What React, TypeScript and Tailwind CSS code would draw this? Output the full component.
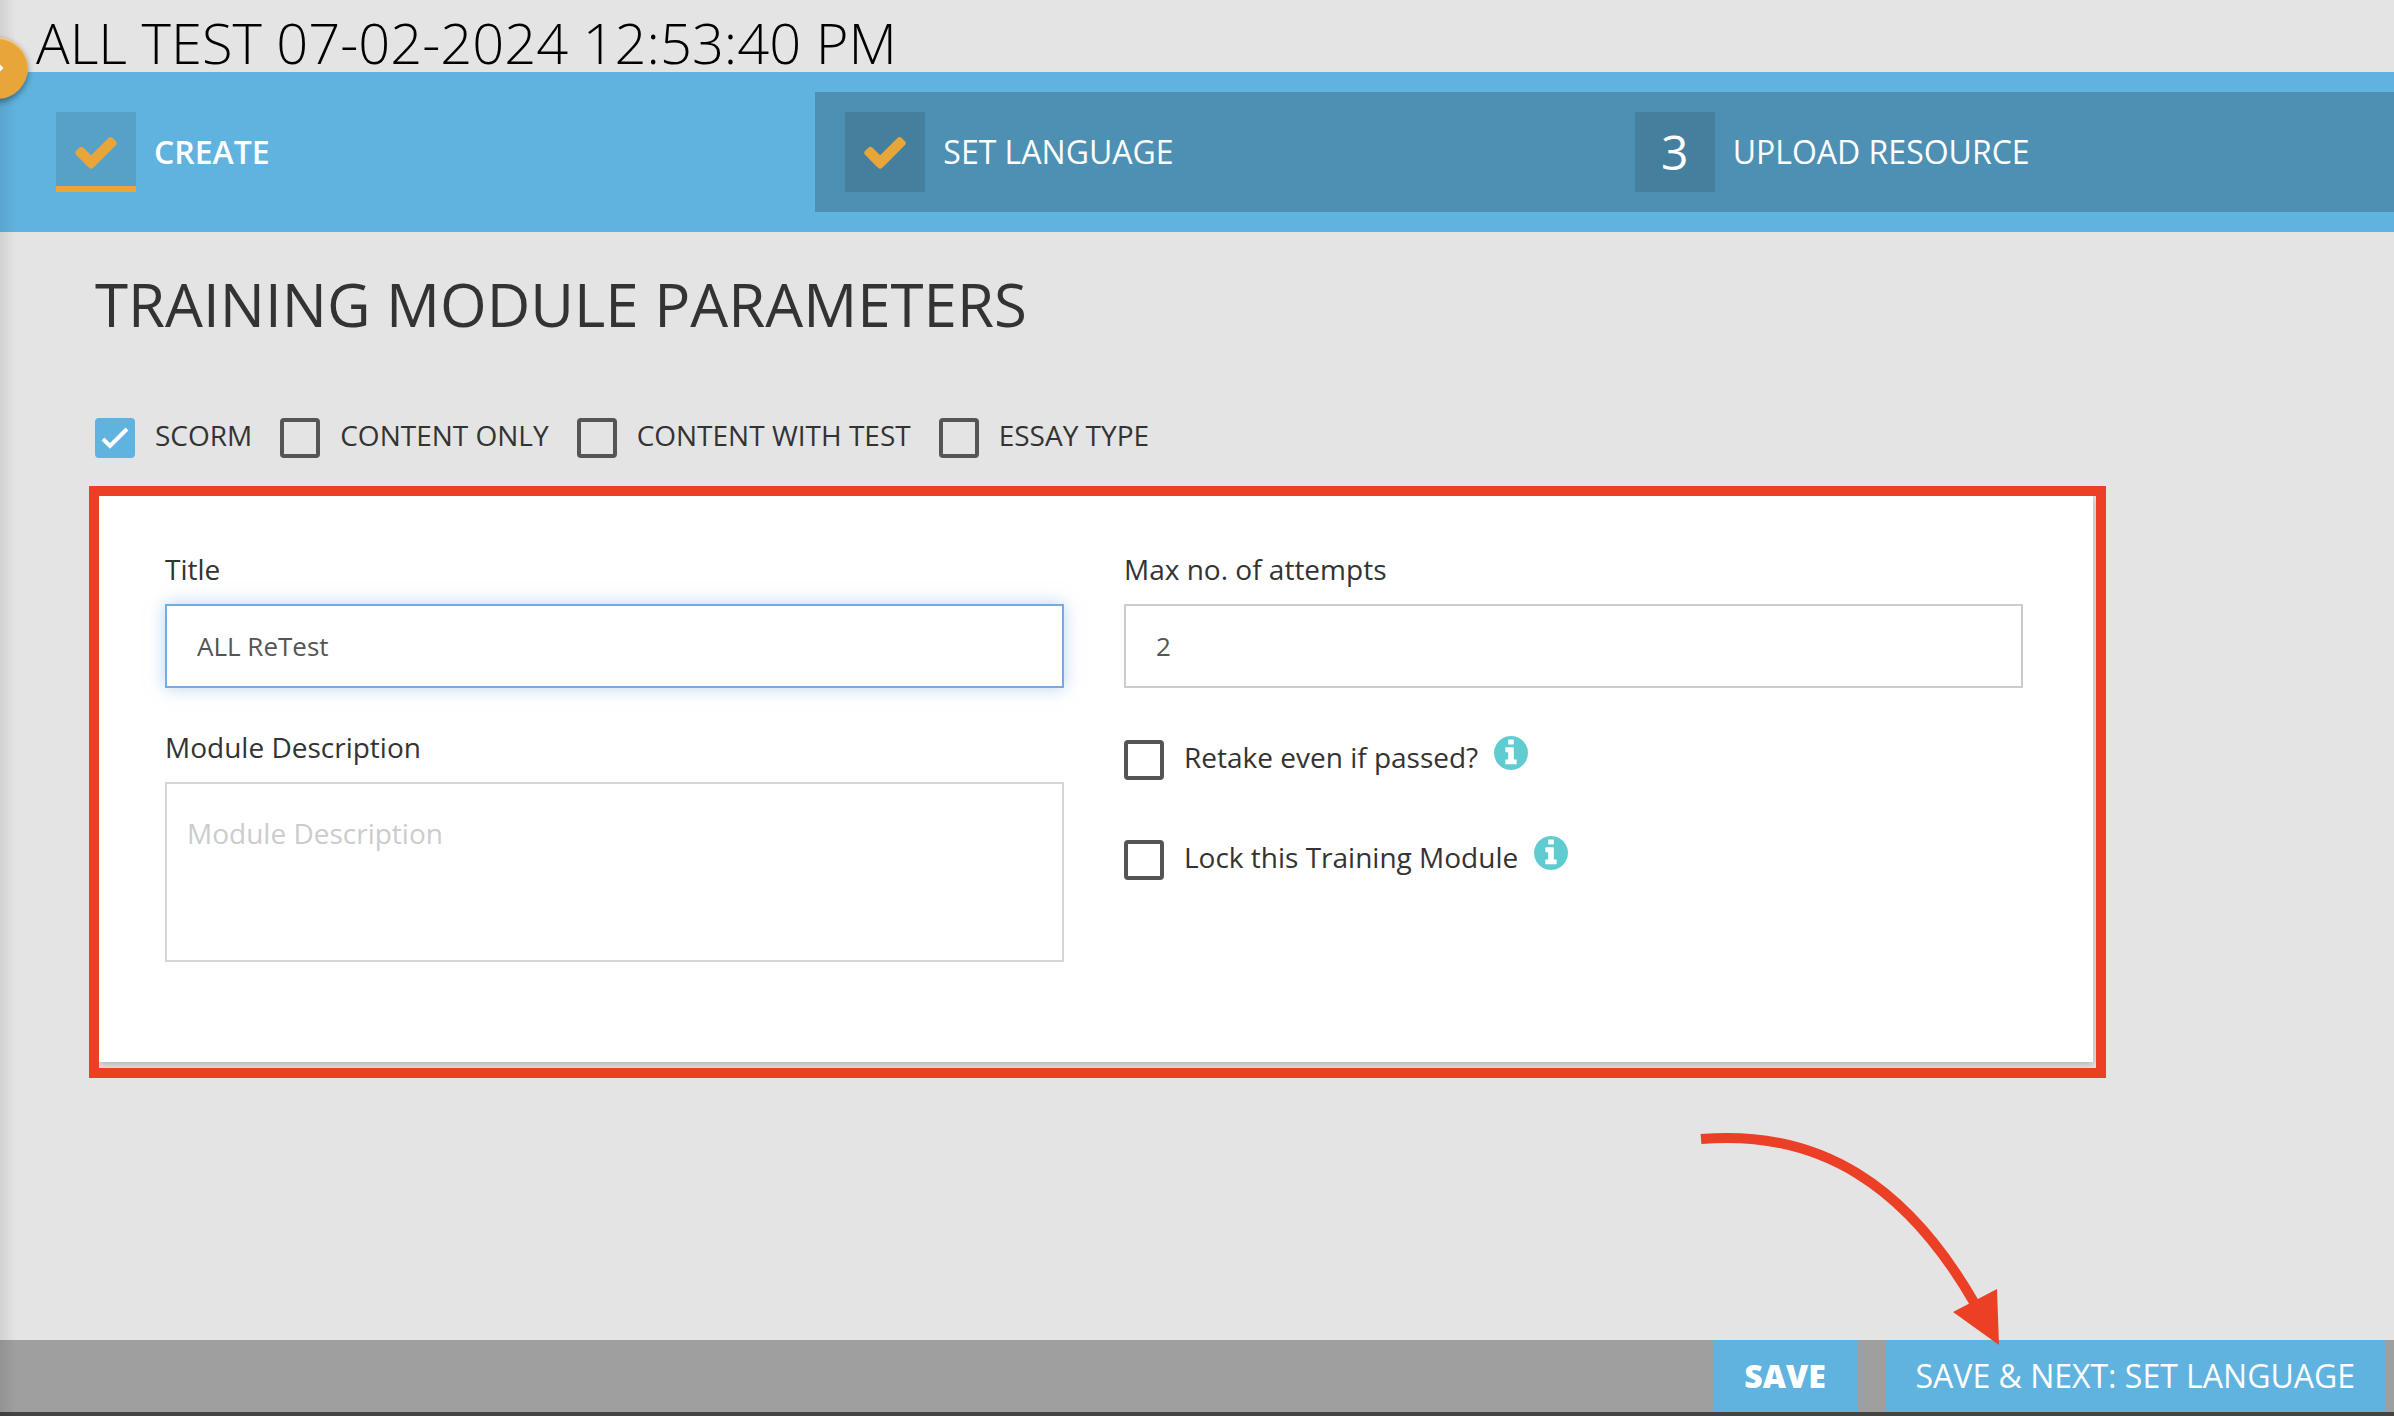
import { useState } from "react";
import { FaChevronRight } from "react-icons/fa";

const MODULE_TYPES = ["SCORM", "CONTENT ONLY", "CONTENT WITH TEST", "ESSAY TYPE"];

const STEPS = [
  { label: "CREATE", done: true },
  { label: "SET LANGUAGE", done: true },
  { label: "UPLOAD RESOURCE", done: false },
];

export default function App() {
  const [type, setType] = useState("SCORM");

  return (
    <div className="relative flex min-h-screen flex-col overflow-hidden bg-[#e4e4e4] font-['Open_Sans',sans-serif] text-[#333]">
      <header className="flex h-[72px] items-center pt-3 pl-9">
        <h1 className="text-[56px] leading-[56px] font-light whitespace-nowrap text-black">ALL TEST 07-02-2024 12:53:40 PM</h1>
      </header>
      <Stepper current={0} />

      <main className="flex-1 pr-[288px] pl-[89px]">
        <h2 className="pt-[38px] pl-1.5 text-[60px] leading-[68px]">TRAINING MODULE PARAMETERS</h2>
        <div className="flex gap-7 pt-20 pl-1.5">
          {MODULE_TYPES.map((name) => (
            <Check key={name} label={name} checked={type === name} onChange={() => setType(name)} />
          ))}
        </div>
        <ParameterForm />
      </main>

      <footer className="flex h-[76px] justify-end gap-7 border-b-4 border-[#444] bg-[#9f9f9f] pr-[9px] text-[32px] text-white">
        <button className="w-[145px] bg-[#60b3df] font-extrabold">SAVE</button>
        <button className="bg-[#60b3df] px-[30px]">SAVE &amp; NEXT: SET LANGUAGE</button>
      </footer>

      <DrawerHandle />
      <Arrow />
    </div>
  );
}

function Stepper({ current }: { current: number }) {
  return (
    <nav className="grid h-[160px] grid-cols-3 bg-[#60b3df] py-5 pl-[26px]">
      {STEPS.map(({ label, done }, i) => (
        <a
          key={label}
          href="#"
          className={`flex items-center gap-[18px] pl-[30px] text-[32px] text-white ${i === current ? "font-semibold" : "bg-[#4d90b3]"}`}
        >
          <span
            className={`flex size-20 items-center justify-center text-5xl font-normal ${
              i === current ? "border-b-6 border-[#e8a53a] bg-[#57a1c9] pt-1.5" : "bg-[#457f9e]"
            }`}
          >
            {done ? <CheckIcon /> : i + 1}
          </span>
          {label}
        </a>
      ))}
    </nav>
  );
}

function ParameterForm() {
  return (
    <form className="mt-7 overflow-hidden border-10 border-[#eb4026] pr-[3px] pb-1.5">
      <div className="grid grid-cols-2 gap-[60px] bg-white pt-[54px] pr-[70px] pb-[100px] pl-[66px] text-[28px] leading-[38px] shadow-[0_2px_8px_#00000040]">
        <div className="flex flex-col">
          <label htmlFor="title">Title</label>
          <input
            id="title"
            defaultValue="ALL ReTest"
            className="mt-4 h-[84px] border-2 border-[#74abe2] px-[30px] text-[26px] text-[#555] shadow-[0_0_16px_#74abe280] outline-none"
          />
          <label htmlFor="description" className="mt-10">
            Module Description
          </label>
          <textarea
            id="description"
            placeholder="Module Description"
            className="mt-4 h-[180px] resize-none border-2 border-[#d6d6d6] px-5 py-[30px] outline-none placeholder:text-[#ccc]"
          />
        </div>
        <div className="flex flex-col">
          <label htmlFor="attempts">Max no. of attempts</label>
          <input
            id="attempts"
            defaultValue="2"
            className="mt-4 h-[84px] border-2 border-[#ccc] px-[30px] text-[26px] text-[#555] outline-none"
          />
          <div className="mt-[52px] flex flex-col gap-[60px]">
            <Check label="Retake even if passed?" info />
            <Check label="Lock this Training Module" info />
          </div>
        </div>
      </div>
    </form>
  );
}

type CheckProps = {
  label: string;
  checked?: boolean;
  info?: boolean;
  onChange?: () => void;
};

function Check({ label, checked, info, onChange }: CheckProps) {
  return (
    <label className="flex h-10 items-center gap-5 text-[28px] leading-[34px] whitespace-nowrap">
      <span className="relative size-10">
        <input
          type="checkbox"
          checked={checked}
          onChange={onChange}
          className="peer block size-10 appearance-none rounded-sm border-4 border-[#555] checked:border-[#60b3df] checked:bg-[#60b3df]"
        />
        <svg viewBox="0 0 40 40" className="pointer-events-none absolute inset-0 hidden size-10 peer-checked:block">
          <path d="M8 21l7 7 17-17" fill="none" stroke="white" strokeWidth="4" />
        </svg>
      </span>
      <span className="flex items-start gap-4 pb-1.5">
        {label}
        {info && <InfoIcon />}
      </span>
    </label>
  );
}

function CheckIcon() {
  return (
    <svg viewBox="0 0 1792 1792" fill="currentColor" className="size-12 text-[#e8a53a]">
      <path d="M1671 566q0 40-28 68l-724 724-136 136q-28 28-68 28t-68-28l-136-136-362-362q-28-28-28-68t28-68l136-136q28-28 68-28t68 28l294 295 656-657q28-28 68-28t68 28l136 136q28 28 28 68z" />
    </svg>
  );
}

function InfoIcon() {
  return (
    <svg viewBox="128 128 1536 1536" fill="currentColor" className="-mt-1 size-[34px] text-[#5fccd1]">
      <path d="M1152 1376v-160q0-14-9-23t-23-9h-96v-512q0-14-9-23t-23-9h-320q-14 0-23 9t-9 23v160q0 14 9 23t23 9h96v320h-96q-14 0-23 9t-9 23v160q0 14 9 23t23 9h448q14 0 23-9t9-23zm-128-896v-160q0-14-9-23t-23-9h-192q-14 0-23 9t-9 23v160q0 14 9 23t23 9h192q14 0 23-9t9-23zm640 416q0 209-103 385.5t-279.5 279.5-385.5 103-385.5-103-279.5-279.5-103-385.5 103-385.5 279.5-279.5 385.5-103 385.5 103 279.5 279.5 103 385.5z" />
    </svg>
  );
}

function DrawerHandle() {
  return (
    <>
      <div className="pointer-events-none absolute inset-y-0 left-0 w-4 bg-linear-to-r from-black/8 to-transparent" />
      <button
        aria-label="Open menu"
        className="absolute top-[37px] left-[-34px] flex size-[62px] items-center justify-end rounded-full bg-[#e8a53a] pr-5 text-white shadow-[0_3px_6px_#00000066,inset_0_2px_1px_#ffffff66]"
      >
        <FaChevronRight className="size-5" />
      </button>
    </>
  );
}

function Arrow() {
  return (
    <svg viewBox="0 0 310 220" className="pointer-events-none absolute right-[388px] bottom-[66px] h-[220px] w-[310px]">
      <path d="M5 9C125 -1 212 57 279 174" fill="none" stroke="#eb4026" strokeWidth="10" />
      <path d="M301 159L257 182L303 215Z" fill="#eb4026" />
    </svg>
  );
}
